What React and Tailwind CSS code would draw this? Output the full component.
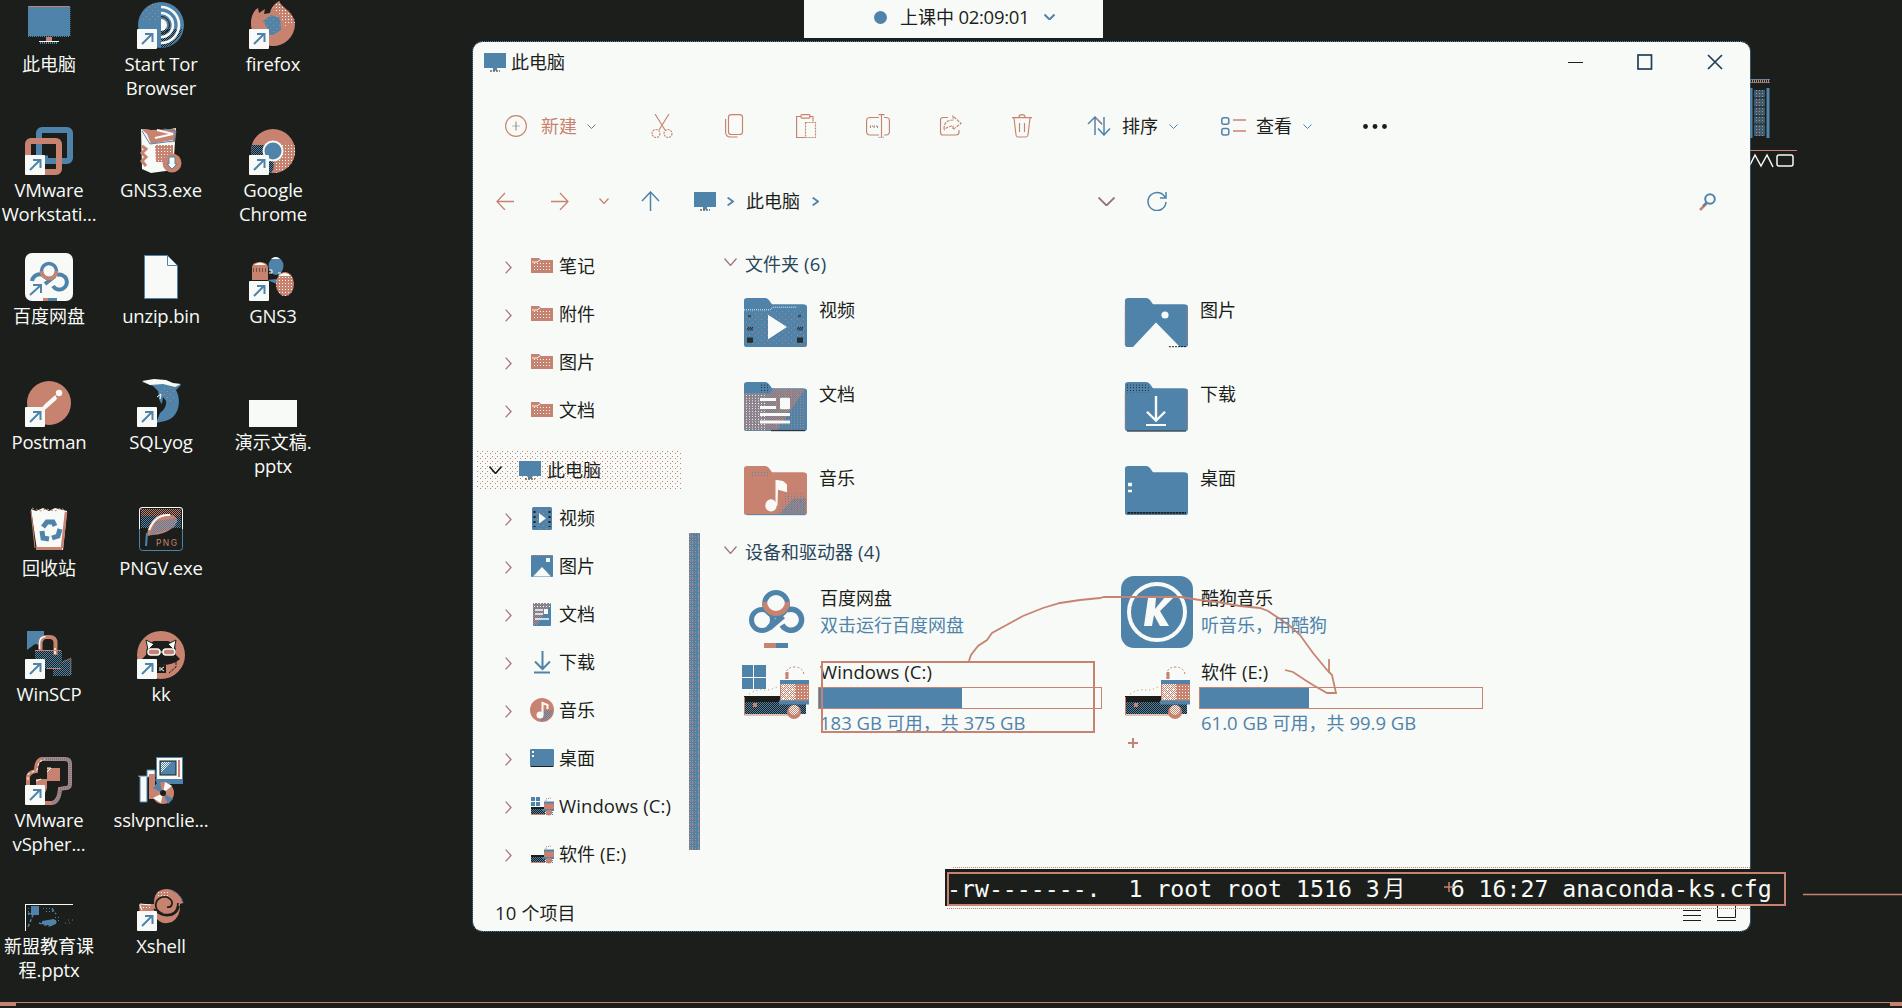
import React from "react";

const B = "#5083aa";
const S = "#c88370";
const W = "#f8faf7";
const K = "#1c1e1b";

/* Chinese runs keep the base size, Latin runs are set slightly larger. */
function T({ children, latin = "text-[18.5px] tracking-[0.1px]" }) {
  const parts = String(children).split(/([\u3000-\u9fff\uff00-\uffef]+)/).filter(Boolean);
  return (
    <span className="whitespace-pre">
      {parts.map((p, i) =>
        /[\u3000-\u9fff\uff00-\uffef]/.test(p) ? (
          <span key={i}>{p}</span>
        ) : (
          <span key={i} className={latin}>{p}</span>
        )
      )}
    </span>
  );
}

function Ico({ w = 48, h = w, vb, className = "", children }) {
  return (
    <svg width={w} height={h} viewBox={vb || `0 0 ${w} ${h}`} preserveAspectRatio="none" className={`block shrink-0 ${className}`} fill="none">
      {children}
    </svg>
  );
}

function Patterns() {
  const dot = (id, n, color, pts) => (
    <pattern id={id} width={n} height={n} patternUnits="userSpaceOnUse">
      {pts.map(([x, y], i) => <rect key={i} x={x} y={y} width="1" height="1" fill={color} shapeRendering="crispEdges" />)}
    </pattern>
  );
  return (
    <svg width="0" height="0" className="absolute">
      <defs>
        {dot("sSparse", 6, S, [[0, 0], [3, 3]])}
        {dot("sHalf", 2, S, [[0, 0], [1, 1]])}
        {dot("sQuarter", 3, S, [[0, 0]])}
        {dot("wQuarter", 3, W, [[0, 0]])}
        {dot("wHalf", 2, W, [[0, 0], [1, 1]])}
        {dot("bHalf", 2, B, [[0, 0], [1, 1]])}
        {dot("bQuarter", 3, B, [[0, 1]])}
        {dot("kHalf", 2, K, [[0, 0], [1, 1]])}
        {dot("kQuarter", 3, K, [[0, 0]])}
        {dot("select", 5, S, [[0, 0], [3, 2]])}
      </defs>
    </svg>
  );
}

const Shortcut = () => (
  <g>
    <rect x="0" y="28" width="20" height="20" rx="1" fill={W} />
    <path d="M5 43L15 33M8 33h7.5v8" stroke={B} strokeWidth="2" />
  </g>
);

const icons = {
  pc: (
    <>
      <rect x="3" y="5" width="42" height="30" fill={B} />
      <path d="M4 5.5h40" stroke={S} />
      <path d="M3 35.5h42M45 6v29" stroke={B} strokeDasharray="1 1" />
      <rect x="21" y="36" width="6" height="5" fill={S} />
      <path d="M14 40.5h20" stroke={W} />
      <path d="M15 42h18" stroke={B} strokeWidth="2" strokeDasharray="1 1" />
    </>
  ),
  tor: (
    <>
      <circle cx="24" cy="24" r="23" fill={B} />
      <path d="M4 13A23 23 0 0 1 24 1v18H4z" fill="url(#sSparse)" />
      <path d="M24 28h21a23 23 0 0 1-21 19z" fill="url(#kHalf)" />
      <path d="M24 6a18 18 0 0 1 0 36" stroke={W} strokeWidth="2.6" />
      <path d="M24 12a12 12 0 0 1 0 24" stroke={W} strokeWidth="2.6" />
      <path d="M24 18a6 6 0 0 1 0 12z" fill={W} />
      <path d="M24 15.5a8.5 8.5 0 0 1 0 17" stroke={K} strokeWidth="1" />
      <Shortcut />
    </>
  ),
  firefox: (
    <>
      <path d="M2 22C2 15 5 9 9 7l1 5 6-4-1 5 6-1q1-7 9-12c3 7 16 11 16 24a22 22 0 0 1-44-2z" fill={S} />
      <path d="M14 20l8-6 9 3 1 12-8 5-9-1q6-4 2-8z" fill={B} />
      <path d="M24 8q2-6 6-8c3 7 16 11 16 22l-10 3-6-13z" fill="url(#wQuarter)" />
      <path d="M15 15h18v18H15z" fill="url(#sSparse)" />
      <Shortcut />
    </>
  ),
  vmware: (
    <>
      <rect x="14" y="3" width="31" height="31" rx="3" stroke={B} strokeWidth="6" />
      <rect x="3" y="14" width="31" height="31" rx="3" stroke={S} strokeWidth="6" />
      <path d="M14 17v14h9" stroke={B} strokeWidth="5" />
      <Shortcut />
    </>
  ),
  gns3exe: (
    <>
      <path d="M4 2l20 2 15-3-1 14-2 28-22 3-9-4z" fill={W} />
      <path d="M4 2l10 1 24-1v13l-24 2-4-10z" fill={S} />
      <path d="M5 5l8 13 23-4M20 3l16 4-18 4" stroke={W} strokeWidth="2" />
      <path d="M5 4l8 13 24-3M27 2l12 2-2 10" stroke={B} />
      <path d="M18 18h18v17H19z" fill={S} />
      <path d="M14 18h24v22H14z" fill="url(#wQuarter)" />
      <path d="M5 19l4 3-4 4 4 4-4 4 4 5" stroke={S} strokeWidth="3" />
      <circle cx="35" cy="36" r="9.5" fill={S} />
      <path d="M32 30h6v7h2l-5 5-5-5h2z" fill={W} stroke={B} />
    </>
  ),
  chrome: (
    <>
      <circle cx="24" cy="24" r="22" fill={S} />
      <path d="M2 24a22 22 0 0 0 20 22l9-16-10-12H3z" fill={K} />
      <path d="M2 24a22 22 0 0 0 20 22l9-16-10-12H3z" fill="url(#bHalf)" />
      <path d="M24 17h21a22 22 0 0 1-20 29z" fill={S} />
      <path d="M24 17h21a22 22 0 0 1-20 29z" fill="url(#wQuarter)" />
      <circle cx="24" cy="24" r="9.5" fill={B} stroke={W} strokeWidth="2" />
      <Shortcut />
    </>
  ),
  baidu: (
    <>
      <rect width="48" height="48" rx="7" fill={W} />
      <path d="M7 28a8 8 0 0 1 11-6M20 31l10-8M28 33a7.500 7.500 0 1 0 4-11" stroke={B} strokeWidth="4" />
      <circle cx="24" cy="18" r="7.500" fill={W} stroke={B} strokeWidth="3.500" />
      <path d="M16.500 18a7.500 7.500 0 0 0 15 0" stroke={S} strokeWidth="3.500" />
      <path d="M5 42l11-10M8 32h8v8" stroke={B} strokeWidth="2" />
      <path d="M18 46.500h5" stroke={S} strokeWidth="3" />
      <path d="M23 46.500h9" stroke={B} strokeWidth="3" />
    </>
  ),
  file: (
    <>
      <path d="M7.500 2.500h23l10 10v33h-33z" fill={W} stroke={B} />
      <path d="M30.500 2.500v10h10" stroke={B} />
    </>
  ),
  gns3: (
    <>
      <path d="M3 27V15q0-6 8-6t8 6v12z" fill={S} />
      <path d="M5 12q6-5 12 0z" fill={W} />
      <path d="M4 16h14M4 18h14" stroke={K} strokeDasharray="1 2" />
      <ellipse cx="27" cy="13" rx="7.500" ry="9" fill={B} />
      <path d="M22 6q5-4 9 0z" fill={W} />
      <path d="M18 27l10-1v5z" fill={B} />
      <ellipse cx="36" cy="31" rx="9" ry="12" fill={S} />
      <ellipse cx="36" cy="31" rx="9" ry="12" fill="url(#wQuarter)" />
      <path d="M29 23q7-6 13 0z" fill={W} />
      <path d="M20 17h3v3h-3M29 20h3" stroke={W} />
      <Shortcut />
    </>
  ),
  postman: (
    <>
      <circle cx="24" cy="24" r="22" fill={S} />
      <circle cx="34" cy="14" r="3.200" fill={W} />
      <path d="M31 16l-11 9-1 4-4 5 16-13z" fill={W} />
      <path d="M31 18L19 29" stroke={W} strokeWidth="4" />
      <Shortcut />
    </>
  ),
  dolphin: (
    <>
      <path d="M5 3l12-2 12 1 7 3 8 1-5 5c6 11 3 28-11 31l-9 2 4-10c3-2 7-7 6-12l-3-4-1 7c-4-4-3-9-4-13l-5-5z" fill={B} />
      <path d="M5 2l12-2 12 1 7 3 8 1-6 3-12-3-13 1z" fill={W} />
      <path d="M22 8h17v15H29z" fill="url(#sSparse)" />
      <path d="M20 18l4-3-1 5" stroke={W} />
      <Shortcut />
    </>
  ),
  pptx: <rect x="0" y="21" width="48" height="27" fill={W} />,
  bin: (
    <>
      <path d="M6 4l5 2 7-3 6 3 6-3 12 3-4 39H12z" fill={W} />
      <path d="M6 6l4 37" stroke={S} />
      <path d="M41 7l-4 36" stroke={S} strokeWidth="2.500" />
      <path d="M11 42h26v3H11z" fill={S} />
      <path d="M7 3l9 3 5-2 9 2 6-3 5 3" stroke={S} strokeDasharray="2 2" />
      <path d="M18 22l4-5h6l2 4M35 24l-2 7-6 2M24 34l-6-1-1-7" stroke={B} strokeWidth="5" />
    </>
  ),
  png: (
    <>
      <rect x="2.500" y="2.500" width="43" height="43" rx="3" fill={K} stroke={B} />
      <path d="M4 4h40v19H4z" fill="url(#bHalf)" />
      <path d="M4 4h40v7H4z" fill="url(#sHalf)" />
      <path d="M2.500 24V5q0-2.500 2.500-2.500h38q2.500 0 2.500 2.500v19" stroke={W} />
      <path d="M10 31C11 18 19 8 30 9s14 8 4 15-18 5-24 7z" fill={S} />
      <path d="M19 16l20-3v9l-27 9z" fill="url(#bHalf)" />
      <path d="M12 25c4-10 10-16 21-15" stroke={W} strokeWidth="2" />
      <path d="M10 28l-1 13" stroke={B} strokeWidth="2" />
      <text x="19" y="41" fill={S} fontSize="8.500" fontFamily="Inter, sans-serif" textLength="21">PNG</text>
    </>
  ),
  winscp: (
    <>
      <path d="M2 0h17v9l-4 5-5-1-8 6z" fill={B} />
      <rect x="10" y="19" width="27" height="19" fill={K} />
      <rect x="10" y="19" width="27" height="19" fill="url(#bHalf)" />
      <path d="M28 33l18-6v18H28z" fill="url(#bHalf)" />
      <path d="M38 31l8-4v17" stroke={S} strokeDasharray="1 1" />
      <path d="M15.500 20v-8q0-6 6-6h3q6 0 6 6v12" stroke={S} strokeWidth="4" />
      <path d="M14.500 18v-6q0-6 6-6.500M30 17v6" stroke={W} strokeWidth="1.500" />
      <path d="M10 19.500h26M22 37.500h14" stroke={S} />
      <Shortcut />
    </>
  ),
  kk: (
    <>
      <circle cx="24" cy="24" r="24" fill={S} />
      <path d="M5 28l4-4q0-12 8-14h14q9 2 8 14l4 4q-6 6-19 6T5 28z" fill={K} />
      <path d="M9 9l8 4-6 6zM39 9l-8 4 6 6z" fill={W} stroke={K} />
      <rect x="11" y="18" width="12" height="6" rx="3" fill={S} stroke={W} strokeWidth="1.500" />
      <rect x="26" y="18" width="12" height="6" rx="3" fill={S} stroke={W} strokeWidth="1.500" />
      <path d="M22 21h5" stroke={W} />
      <rect x="20" y="34" width="9" height="8" fill={K} />
      <path d="M23 36v4M27 36l-3 2 3 2" stroke={W} />
      <path d="M39 31v5l-7 6" stroke={K} strokeDasharray="3 1" />
      <Shortcut />
    </>
  ),
  vsphere: (
    <>
      <path d="M17 2h23q5 0 5 5v20q0 4-5 4l-5 1q-1 13-8 14H9q-6-1-6-6V20q1-5 8-6 0-11 6-12z" fill={K} stroke={S} strokeWidth="4" />
      <path d="M17 2h23q5 0 5 5v20q0 4-5 4l-5 1q-1 13-8 14" stroke={B} strokeWidth="3" strokeDasharray="1 1" />
      <path d="M3 23V17l9-4 2-8 6-3" stroke={W} strokeDasharray="3 2" />
      <path d="M22 11h13v13H22zM11 22h11v9l-3 8h-8z" fill={S} />
      <path d="M22 11h4l-4 4M11 24l5-2" stroke={W} />
      <Shortcut />
    </>
  ),
  ssl: (
    <>
      <rect x="19.500" y="0.500" width="26" height="22" fill={W} stroke={B} />
      <rect x="23" y="4" width="16" height="14" fill={B} stroke={K} />
      <path d="M24 5h10L24 16z" fill="url(#wHalf)" />
      <path d="M42 3v17" stroke={S} strokeWidth="2" />
      <path d="M18 22h28v5H20z" fill={B} />
      <path d="M1 19h9v-6h8v7h-8v25H3V20" fill={W} stroke={B} />
      <path d="M12 17h6v25h-6z" fill={S} />
      <circle cx="26" cy="36" r="11" fill={S} />
      <path d="M16 31l9 5-2-12zM26 36l10 6-5 5z" fill={B} />
      <path d="M26 36l-2 10-8-5zM26 36l2-11 7 4z" fill={W} />
      <circle cx="26" cy="36" r="3" fill={K} />
    </>
  ),
  deck: (
    <>
      <path d="M0 21.500h48M0.500 21v27" stroke={W} />
      <path d="M6 23h8v9H6zM17 38l12-2 3 3-5 4-10-2z" fill={B} />
      <path d="M3 25h9v9H3zM17 23h12v7h-9zM30 33h5v7h-5z" fill="url(#bQuarter)" />
      <path d="M3 30l5 2-5 12M14 40l10 3 7-3M27 26l4 5M10 23l3 6" stroke={B} strokeWidth="1.500" strokeDasharray="3 2" />
      <path d="M40 40h8M43 37h5" stroke={B} strokeDasharray="1 3" />
    </>
  ),
  xshell: (
    <>
      <path d="M2 21h15l7 4 6 10H3z" fill={S} />
      <path d="M17 20Q17 6 30 6q12 1 16 14l-3 1q1 12-8 18-12 4-17-6z" fill={S} />
      <path d="M30 24q4 1 5-3t-5-7q-9-1-11 6t7 11q14 3 15-11" stroke={K} strokeWidth="1.700" />
      <path d="M17 26q8 9 18 6 6-3 7-9" stroke={K} strokeWidth="1.700" />
      <path d="M35 8q11 5 11 13" stroke={B} strokeDasharray="2 1" />
      <path d="M20 9h12v6H18zM3 22h12v5H3z" fill="url(#wQuarter)" />
      <path d="M3 21l11 1M3 22l2 5" stroke={W} />
      <Shortcut />
    </>
  ),
};

const desktop = [
  ["pc", "此电脑"], ["tor", "Start Tor", "Browser"], ["firefox", "firefox"],
  ["vmware", "VMware", "Workstati..."], ["gns3exe", "GNS3.exe"], ["chrome", "Google", "Chrome"],
  ["baidu", "百度网盘"], ["file", "unzip.bin"], ["gns3", "GNS3"],
  ["postman", "Postman"], ["dolphin", "SQLyog"], ["pptx", "演示文稿.", "pptx"],
  ["bin", "回收站"], ["png", "PNGV.exe"], null,
  ["winscp", "WinSCP"], ["kk", "kk"], null,
  ["vsphere", "VMware", "vSpher..."], ["ssl", "sslvpnclie..."], null,
  ["deck", "新盟教育课", "程.pptx"], ["xshell", "Xshell"], null,
];

function Desktop() {
  return (
    <div className="-ml-[7px] grid w-[336px] auto-rows-[126px] grid-cols-3 text-center text-[18px] leading-[24px] text-[#f8faf7]">
      {desktop.map((d, i) => (
        <div key={i} className="flex flex-col items-center pt-px">
          {d && (
            <>
              <Ico>{icons[d[0]]}</Ico>
              <div className="mt-[3px] whitespace-nowrap">
                {d.slice(1).map((l) => <div key={l} className="h-6"><T latin="text-[18.5px] tracking-[-0.2px]">{l}</T></div>)}
              </div>
            </>
          )}
        </div>
      ))}
    </div>
  );
}

const Monitor = ({ className = "" }) => (
  <Ico w={22} h={19} className={className}>
    <rect width="22" height="15" fill={B} />
    <rect x="9" y="15" width="4" height="2.500" fill={B} />
    <path d="M6 18h10" stroke={K} strokeDasharray="2 1" />
  </Ico>
);
const Down = ({ w = 9, h = 5, c = B, sw = 1, className = "" }) => (
  <Ico w={w} h={h} className={className}><path d={`M.5 .5L${w / 2} ${h - 0.5}L${w - 0.5} .5`} stroke={c} strokeWidth={sw} /></Ico>
);
const Right = ({ h = 12, c = "#a5767c", sw = 1.3, className = "" }) => (
  <Ico w={7} h={h} className={className}><path d={`M.6 .6L6 ${h / 2}L.6 ${h - 0.6}`} stroke={c} strokeWidth={sw} /></Ico>
);

function Toolbar() {
  const p = { stroke: S, strokeWidth: 1.15 };
  return (
    <div className="flex h-[88px] items-center text-[18px] leading-[24px] text-[#1c1e1b]">
      <Ico w={22} h={22} className="ml-8 -mt-px"><circle cx="11" cy="11" r="10.400" {...p} /><path d="M11 6.500v9" {...p} /><path d="M7.500 11h7" stroke={B} strokeDasharray="1 1" /></Ico>
      <span className="ml-[14px] w-9 text-[#c88370]">新建</span>
      <Down className="ml-[10px]" />
      <div className="ml-[54px] flex gap-12">
        <Ico w={24}><path d="M5 0l10 16M19 0L9 16" {...p} /><circle cx="6" cy="19.500" r="4" {...p} strokeDasharray="2 1" /><circle cx="18" cy="19.500" r="4" {...p} strokeDasharray="2 1" /></Ico>
        <Ico w={24}><path d="M6.500 3q0-2.400 3-2.400h8q3 0 3 2.400v15q0 2.500-3 2.500h-8q-3 0-3-2.500z" {...p} /><path d="M3.600 5v13q0 5 5 5h7" {...p} /></Ico>
        <Ico w={24}><path d="M7 2.500H2.600v21H11M15 2.500h4v5" {...p} /><rect x="7" y=".6" width="9" height="3.500" rx="1" {...p} /><rect x="11.500" y="8.500" width="10" height="15" {...p} strokeDasharray="2 1" /></Ico>
        <Ico w={24}><path d="M13 3.500H4q-3.400 0-3.400 3v11q0 3.500 3.400 3.500h9M18 3.500h2q3.400 0 3.400 3v11q0 3.500-3.400 3.500h-2M15.500 1v22M12.500.6h6" {...p} /><path d="M12.500 23.400h6M4 12h8" stroke={B} strokeDasharray="1 1" /><path d="M4.500 12v2M8 12v2M11.500 12v2" {...p} /></Ico>
        <Ico w={24}><path d="M10 3.500H5q-2.500 0-2.500 2.500v12.500q0 2.500 2.500 2.500h13q3 0 3-3v-2" {...p} /><path d="M6 15q0-9 9-9V2l8 7.500-8 6V12q-5 0-9 4" {...p} strokeDasharray="3 1" /></Ico>
        <Ico w={24}><path d="M2 3.600h20M9 3q0-2.400 3-2.400T15 3M4 4l2 17q.3 2 2 2h8q1.700 0 2-2l2-17M9.500 9v9M14.500 9v9" {...p} /></Ico>
      </div>
      <Ico w={24} h={20} className="ml-[53px]"><path d="M8 1v18M1 8l7-7 7 7M17 1v18M11 12.500l6 6.500 6-6.500" stroke={B} strokeWidth="1.500" /><path d="M9 2l6 7" stroke={S} /></Ico>
      <span className="ml-[11px] mr-px w-9">排序</span>
      <Down className="ml-[10px]" />
      <Ico w={25} h={19} className="ml-[43px]"><rect x=".8" y=".8" width="7" height="6.500" rx="2" stroke={B} strokeWidth="1.500" /><rect x=".8" y="11.500" width="7" height="6.500" rx="2" stroke={B} strokeWidth="1.500" /><path d="M12 3h13M12 14h13" stroke={S} strokeWidth="1.500" /></Ico>
      <span className="ml-[10px] mr-px w-9">查看</span>
      <Down className="ml-[10px]" />
      <Ico w={25} h={5} className="ml-[51px] mt-px"><g fill={K}><circle cx="2.500" cy="2.500" r="2.400" /><circle cx="12" cy="2.500" r="2.400" /><circle cx="21.500" cy="2.500" r="2.400" /></g></Ico>
    </div>
  );
}

function AddressBar() {
  return (
    <div className="flex h-[64px] items-center pb-[2px] text-[18px] leading-[24px]">
      <Ico w={18} className="ml-[23px]"><path d="M18 9.500H1M9 1L1 9.500 9 18" stroke={S} strokeWidth="1.300" /></Ico>
      <Ico w={18} className="ml-[37px]"><path d="M0 9.500h17M9 1l8 8.500L9 18" stroke={S} strokeWidth="1.300" /></Ico>
      <Down w={10} h={6} c={S} className="ml-[30px]" sw={1.3} />
      <Ico w={19} h={20} className="ml-8"><path d="M9.500 1v19M1 10l8.500-9 8.500 9" stroke={B} strokeWidth="1.500" /></Ico>
      <Monitor className="ml-[34px]" />
      <Right h={9} c={B} sw={1.8} className="ml-[11px] mt-px" />
      <span className="ml-[12px] w-[54px]">此电脑</span>
      <Right h={9} c={B} sw={1.8} className="ml-[12px] mt-px" />
      <Down w={17} h={9} c="#986f75" sw={1.8} className="ml-[279px]" />
      <Ico w={20} className="ml-[32px]"><path d="M18.500 7.500A9 9 0 1 0 19 11M19 1v6h-6" stroke={B} strokeWidth="1.500" /></Ico>
      <Ico w={18} className="ml-[532px] mt-[2px]"><circle cx="11" cy="6" r="4.800" stroke={B} strokeWidth="2" /><path d="M8 10l-7 7" stroke={S} strokeWidth="2.500" /><path d="M8 9l-4 4" stroke={B} strokeWidth="2" /></Ico>
    </div>
  );
}

const SmallFolder = (
  <><path d="M0 1h8l2 2h12v13H0z" fill={S} /><path d="M2 5h18v10H2z" fill="url(#wQuarter)" /><path d="M1 5h5l3-2" stroke={W} /><path d="M4 8h14v6H4z" fill="url(#bQuarter)" opacity=".45" /></>
);
const SmallDrive = (
  <><rect x="0" y="10" width="14" height="7" fill={K} /><path d="M0 12h22v6H0z" fill="url(#bHalf)" /><path d="M0 17.500h14" stroke={S} /><path d="M13 6h10v6H13z" fill={S} /><path d="M13 5.500h10M11 13h12" stroke={B} strokeWidth="2" /><circle cx="18" cy="15.500" r="3" fill={S} /><path d="M15 4V2l5-1" stroke={S} strokeDasharray="1 1" /></>
);

const side = {
  folder: [22, 18, SmallFolder],
  video: [22, 23, <><rect x="1" width="20" height="23" rx="1.500" fill={B} /><path d="M5 1h12v21H5z" fill="url(#sSparse)" /><path d="M8 6l7 5.500-7 5z" fill={W} /><path d="M3.500 4v16M18.500 4v16" stroke={K} strokeWidth="2" strokeDasharray="2 3" /></>],
  image: [22, 23, <><rect width="22" height="22" rx="1" fill={B} /><path d="M2 21.500L11 12l9 9.500z" fill={W} /><rect x="15" y="3" width="4" height="4" fill={W} /><path d="M1 .5h20" stroke={S} strokeDasharray="1 1" /></>],
  doc: [22, 23, <><rect x="2" width="18" height="23" rx="1" fill={B} /><path d="M2 0h18L6 22H2z" fill="url(#sHalf)" /><path d="M2 0h18v4H2z" fill="url(#wQuarter)" /><path d="M4 7h8M4 11h8M4 16h14" stroke={W} strokeWidth="1.600" /><rect x="13" y="6" width="4" height="5" fill={W} /></>],
  down: [22, 23, <path d="M11.500 0v18M4 10.500l7.500 7.500 7.500-7.500M3 21.500h16" stroke={B} strokeWidth="2" />],
  music: [24, 24, <><circle cx="12" cy="12" r="12" fill={S} /><path d="M14 12h9l-1 5-5 5-7 2z" fill="url(#bHalf)" /><circle cx="10" cy="17" r="3.500" fill={W} /><path d="M12.500 17V5l5 2v4" stroke={W} strokeWidth="2" /></>],
  desk: [24, 18, <><rect width="24" height="18" rx="1" fill={B} /><path d="M2 2h2v2H2zM2 6h2v2H2z" fill={W} /><path d="M1 17.500h22" stroke={K} /></>],
  win: [23, 19, <><path d="M0 0h4v4H0zM5 0h4v4H5zM0 5h4v4H0zM5 5h4v4H5z" fill={B} />{SmallDrive}</>],
  drive: [23, 19, SmallDrive],
};

function SideRow({ icon, label }) {
  const [w, h, art] = side[icon];
  return (
    <div className="flex h-12 items-center pl-8">
      <Right h={13} className="mt-[2px]" />
      <div className="ml-[17px] flex w-[26px] justify-center"><Ico w={w} h={h}>{art}</Ico></div>
      <span className="ml-1 whitespace-nowrap"><T>{label}</T></span>
    </div>
  );
}

function Sidebar() {
  return (
    <div className="h-[637px] w-[214px] shrink-0 pt-[8px] text-[18px] leading-[24px]">
      {["笔记", "附件", "图片", "文档"].map((l) => <SideRow key={l} icon="folder" label={l} />)}
      <div className="relative ml-1 mt-[17px] mb-[5px] h-[38px] w-[204px]">
        <svg width="204" height="38" className="absolute inset-0"><rect width="204" height="38" fill="url(#select)" /></svg>
        <div className="relative flex h-full items-center pl-3">
          <Down w={13} h={8} c={K} sw={1.6} />
          <Monitor className="ml-[17px]" />
          <span className="ml-[6px]">此电脑</span>
        </div>
      </div>
      {[["video", "视频"], ["image", "图片"], ["doc", "文档"], ["down", "下载"], ["music", "音乐"], ["desk", "桌面"], ["win", "Windows (C:)"], ["drive", "软件 (E:)"]].map(([i, l]) => <SideRow key={i} icon={i} label={l} />)}
    </div>
  );
}

const shape = "M1 3q0-3 3-3h18q3 0 5 4l2 3h31q4 0 4 3v43q0 3-3 3H4q-3 0-3-3z";
const Folder = ({ c = B, children }) => (
  <Ico w={64} h={50} vb="0 0 64 57" className="-ml-px"><path d={shape} fill={c} />{children}</Ico>
);
const folders = [
  ["视频", <Folder><path d="M1 15h62v39H1z" fill="url(#sSparse)" /><path d="M25 19l19 14-19 14z" fill={W} /><path d="M1 13.500h26l3-3h24" stroke={W} strokeDasharray="1 1" /><path d="M4 33h6v4H4zM54 33h6v4h-6zM5 19h3v3H5zM55 19h3v3h-3z" fill="url(#kHalf)" /><path d="M4 45h6v6H4zM54 45h6v6h-6z" fill={K} opacity=".85" /></Folder>],
  ["图片", <Folder><path d="M9 56l23-28 24 28z" fill={W} /><ellipse cx="41" cy="19.500" rx="3.600" ry="4" fill={W} /><path d="M45 55.500h18" stroke={K} strokeDasharray="2 1" /><path d="M1 8v45M63 9v44" stroke={S} strokeDasharray="1 1" /></Folder>],
  ["文档", <Folder><path d="M1 13h26l3-5h32L34 55H1z" fill="url(#sHalf)" /><path d="M31 8h32v46H31z" fill="url(#sQuarter)" /><path d="M1 13h22v42H1z" fill="url(#wQuarter)" /><path d="M16 2h11v10H16z" fill="url(#kQuarter)" /><path d="M17 20h16M17 29h16M17 37h30M17 45.500h30" stroke={W} strokeWidth="3.500" /><rect x="37" y="18" width="10" height="13" rx="1.500" fill={W} /><path d="M28 55.500h34" stroke={K} /></Folder>],
  ["下载", <Folder><path d="M2 2h22l2 10H2z" fill="url(#kQuarter)" /><path d="M32 16v28M23 34l9 10 9-10M22 49h20" stroke={W} strokeWidth="2.400" /><path d="M3 56h59" stroke={K} /><path d="M63.500 10v44M1 10v44" stroke={S} strokeDasharray="1 1" /></Folder>],
  ["音乐", <Folder c={S}><path d="M42 31h21v24H30l8-8z" fill="url(#bQuarter)" /><path d="M50 37h13v18H36z" fill="url(#bHalf)" /><path d="M8 5h18v7H8z" fill="url(#bQuarter)" /><ellipse cx="28" cy="45" rx="5.700" ry="7" fill={W} /><path d="M34 44V16l6 1 4 4v9l-9-3" fill={W} /><path d="M33.500 16v29" stroke={W} strokeWidth="2" /><path d="M4 55.500h58" stroke={B} /></Folder>],
  ["桌面", <Folder><path d="M4 19h4v4H4zM4 27h4v3H4z" fill={W} /><path d="M3 53.500h59" stroke={K} strokeWidth="2" /><path d="M3 53.500h59" stroke={B} strokeWidth="1" strokeDasharray="1 2" /></Folder>],
];

const DriveArt = ({ win }) => (
  <Ico w={70} h={56} className="-ml-[2px]">
    {win && <path d="M1 0h11v12H1zM13 0h12v12H13zM1 13h11v11H1zM13 13h12v11H13z" fill={B} />}
    <path d="M8 29q8-5 14-4t14-3" stroke={S} strokeDasharray="1 3" />
    <rect x="3" y="31" width="62" height="18" fill={K} />
    <path d="M3 37h62v12H3z" fill="url(#bHalf)" />
    <path d="M3.500 32v18h48" stroke={S} />
    <rect x="12" y="38" width="4" height="4" fill={S} />
    <path d="M45 14v-6q1-6 9-6 7 0 9 7" stroke={S} strokeDasharray="2 2" />
    <path d="M46 14V7" stroke={S} strokeWidth="3" />
    <rect x="39" y="15" width="29" height="22" fill={S} />
    <rect x="40" y="18" width="27" height="17" fill="url(#wQuarter)" />
    <rect x="40" y="18" width="14" height="17" fill="url(#wHalf)" />
    <path d="M39 17h29M38 37.500h30" stroke={B} strokeWidth="4" />
    <circle cx="53" cy="47" r="7" fill={S} />
    <circle cx="53" cy="45" r="5" fill="url(#wHalf)" />
  </Ico>
);
const BaiduArt = (
  <Ico w={56} h={62}>
    <circle cx="13" cy="32" r="10.500" stroke={B} strokeWidth="5" />
    <path d="M20 40l14-12" stroke={B} strokeWidth="6" />
    <path d="M33 37a10.500 10.500 0 1 0 5-15" stroke={B} strokeWidth="5.500" />
    <circle cx="27" cy="16" r="11.500" fill={W} stroke={B} strokeWidth="5" />
    <path d="M15.500 14a11.500 11.500 0 1 0 23 0" stroke={S} strokeWidth="5" />
    <path d="M15 57.500h12" stroke={S} strokeWidth="5" /><path d="M27 57.500h12" stroke={B} strokeWidth="5" />
  </Ico>
);
const KugouArt = (
  <Ico w={72}>
    <rect width="72" height="72" rx="13" fill={B} />
    <circle cx="36" cy="36" r="28" stroke={W} strokeWidth="4" />
    <path d="M27 22h8l-1 11 10-12h9L39 35l9 15h-9l-6-11-2 11h-8z" fill={W} />
  </Ico>
);

function GroupHead({ children }) {
  return (
    <div className="flex h-6 items-center pl-[22px] text-[18px] leading-[24px] text-[#28455c]">
      <Down w={13} h={8} c="#a5767c" sw={1.3} className="-mt-1" />
      <span className="ml-2"><T latin="text-[18.5px] tracking-[0.3px]">{children}</T></span>
    </div>
  );
}

function Drive({ name, sub, fill, win }) {
  return (
    <div className="flex h-[84px] w-[381px] pl-[1px]">
      <div className="w-[76px] pt-[4px]"><DriveArt win={win} /></div>
      <div className="-ml-[1px]">
        <div className="-mt-px h-6 pl-[2px]"><T>{name}</T></div>
        <div className="mt-[3px] h-[22px] w-[284px] border border-[#c88370]">
          <div className="h-full bg-[#5083aa]" style={{ width: fill }} />
        </div>
        <div className="mt-[2px] h-6 whitespace-nowrap pl-[2px] text-[#5083aa]"><T latin="text-[18.5px]">{sub}</T></div>
      </div>
    </div>
  );
}

function Content() {
  return (
    <div className="w-[1046px] pt-[18px] text-[18px] leading-[24px]">
      <GroupHead>文件夹 (6)</GroupHead>
      <div className="mt-[22px] ml-[42px] grid grid-cols-[381px_381px] auto-rows-[84px]">
        {folders.map(([l, art]) => (
          <div key={l} className="flex">{art}<span className="ml-3">{l}</span></div>
        ))}
      </div>
      <div className="-mt-[10px]"><GroupHead>设备和驱动器 (4)</GroupHead></div>
      <div className="mt-3 ml-10 grid grid-cols-[381px_381px] auto-rows-[85px]">
        <div className="flex">
          <div className="w-[78px] pl-[7px] pt-[12px]">{BaiduArt}</div>
          <div className="pt-[10px]"><div>百度网盘</div><div className="mt-[3px] text-[#5083aa]">双击运行百度网盘</div></div>
        </div>
        <div className="flex">
          <div className="-ml-[2px] w-[80px]">{KugouArt}</div>
          <div className="pt-[10px]"><div>酷狗音乐</div><div className="mt-[3px] text-[#5083aa]">听音乐，用酷狗</div></div>
        </div>
        <Drive win name="Windows (C:)" sub="183 GB 可用，共 375 GB" fill="143px" />
        <Drive name="软件 (E:)" sub="61.0 GB 可用，共 99.9 GB" fill="109px" />
      </div>
    </div>
  );
}

function ExplorerWindow() {
  return (
    <section className="absolute left-[473px] top-[42px] flex h-[889px] w-[1277px] flex-col overflow-hidden rounded-[9px] bg-[#f8faf7] text-[#1c1e1b] outline-1 outline-dotted outline-[#5083aa]">
      <header className="flex h-10 items-center text-[18px] leading-[24px]">
        <Monitor className="ml-[11px]" />
        <span className="ml-[5px]">此电脑</span>
        <div className="ml-auto mr-[27px] flex gap-[54px]">
          <Ico w={15} h={16}><path d="M0 8.500h15" stroke={K} /></Ico>
          <Ico w={16}><rect x="1" y="1" width="13.500" height="14" stroke="#203f55" strokeWidth="1.700" /></Ico>
          <Ico w={16}><path d="M1 1l14 14M15 1L1 15" stroke="#203f55" strokeWidth="1.700" /></Ico>
        </div>
      </header>
      <Toolbar />
      <AddressBar />
      <div className="flex flex-1">
        <Sidebar />
        <div className="ml-[2px] mt-[299px] h-[317px] w-[11px] shrink-0">
          <svg width="11" height="317"><rect width="11" height="317" fill={B} /><rect width="11" height="317" fill="url(#sQuarter)" /><path d="M1.500 0v317M3.500 0v317M9.500 0v317" stroke={S} strokeDasharray="1 1" /></svg>
        </div>
        <div className="ml-[2px]"><Content /></div>
      </div>
      <footer className="flex h-9 items-center pl-[22px] text-[18px] leading-[24px]">
        <T latin="text-[18.5px] tracking-[0.2px]">10 个项目</T>
        <Ico w={54} h={16} className="mb-px ml-auto mr-[13px]"><path d="M0 5.500h18M0 10.500h18M0 15.500h18" stroke={K} /><path d="M34.500 0v12.500h18V0M34 15.500h19" stroke={K} /></Ico>
      </footer>
    </section>
  );
}

function Terminal() {
  return (
    <div className="absolute left-[945px] top-[869px] h-[37px] w-[841px] bg-[#1c1e1b] pl-[2px] pt-[3px]">
      <div className="flex h-[34px] items-center whitespace-pre border-2 border-[#c88370] font-['DejaVu_Sans_Mono','Noto_Sans_CJK_SC',monospace] text-[23.2px] leading-[30px] text-[#f8faf7]">
        <span className="-ml-[2px] -mt-px">{"-rw-------.  1 root root 1516 3"}</span>
        <span className="-mt-px inline-block w-[29px] text-center text-[22px]">月</span>
        <span className="-mt-px">{"   6 16:27 anaconda-ks.cfg"}</span>
      </div>
    </div>
  );
}

function Annotations() {
  return (
    <svg width="1902" height="1008" className="pointer-events-none absolute inset-0" fill="none" stroke={S}>
      <rect x="822" y="662" width="272" height="70" strokeWidth="2" />
      <path d="M969 661L971 655 978 646 987 640 992 633 1012 622 1023 616 1043 608 1060 603 1080 600 1100 598 1104 597H1180L1200 600 1217 602 1240 606 1260 608 1268 611 1280 619 1290 626 1300 635 1313 653 1327 670 1332 675 1336 693H1327L1313 685 1305 680 1293 672 1285 670M1329 659V673" strokeWidth="1.800" />
      <path d="M1128 743h10M1133 738v10" strokeWidth="2" />
      <path d="M1444 887h10M1449 882v10" strokeWidth="1.500" />
      <path d="M1803 894.500h99" strokeWidth="1.500" />
      <path d="M953 867.500h797M947 908.500h803" strokeDasharray="1 1" />
      <path d="M0 1002.500h1902" />
      <path d="M0 1004.500h16M1890 1004.500h12" strokeWidth="3" />
    </svg>
  );
}

export default function App() {
  return (
    <main className="relative h-[1008px] w-[1902px] overflow-hidden bg-[#1c1e1b] font-['Open_Sans','Noto_Sans_CJK_SC',sans-serif]">
      <Patterns />
      <Desktop />
      <svg width="50" height="92" className="absolute left-[1750px] top-[78px]" fill="none">
        <path d="M0 1.500h20M0 4.500h20" stroke={B} />
        <path d="M0 3h20" stroke={S} strokeWidth="3" strokeDasharray="1 1" />
        <path d="M1 10v50M18 10v50" stroke={B} strokeWidth="3" />
        <path d="M4 12h11v46H4z" fill={B} opacity=".6" />
        <path d="M4 12h11v46H4z" fill="url(#sQuarter)" />
        <path d="M4 20h12M4 29h12M4 38h12M4 46h12" stroke={K} />
        <path d="M0 72.500h47" stroke={S} />
        <path d="M0 87L5 77l6 11 6-11 6 12" stroke={W} strokeWidth="1.500" />
        <rect x="27" y="77" width="16" height="11" rx="2" stroke={W} strokeWidth="1.500" />
      </svg>
      <div className="absolute left-[804px] top-0 flex h-[38px] w-[299px] items-center bg-[#f8faf7] pb-[4px] pl-[70px] text-[18px] leading-[24px] text-[#1c1e1b]">
        <span className="h-[13px] w-[13px] shrink-0 rounded-full bg-[#5083aa]" />
        <span className="ml-[13px] w-[131px] whitespace-nowrap"><T latin="text-[18.5px] tracking-[-0.3px]">上课中 02:09:01</T></span>
        <Down w={11} h={6} sw={2} className="ml-[13px]" />
      </div>
      <ExplorerWindow />
      <Terminal />
      <Annotations />
    </main>
  );
}
